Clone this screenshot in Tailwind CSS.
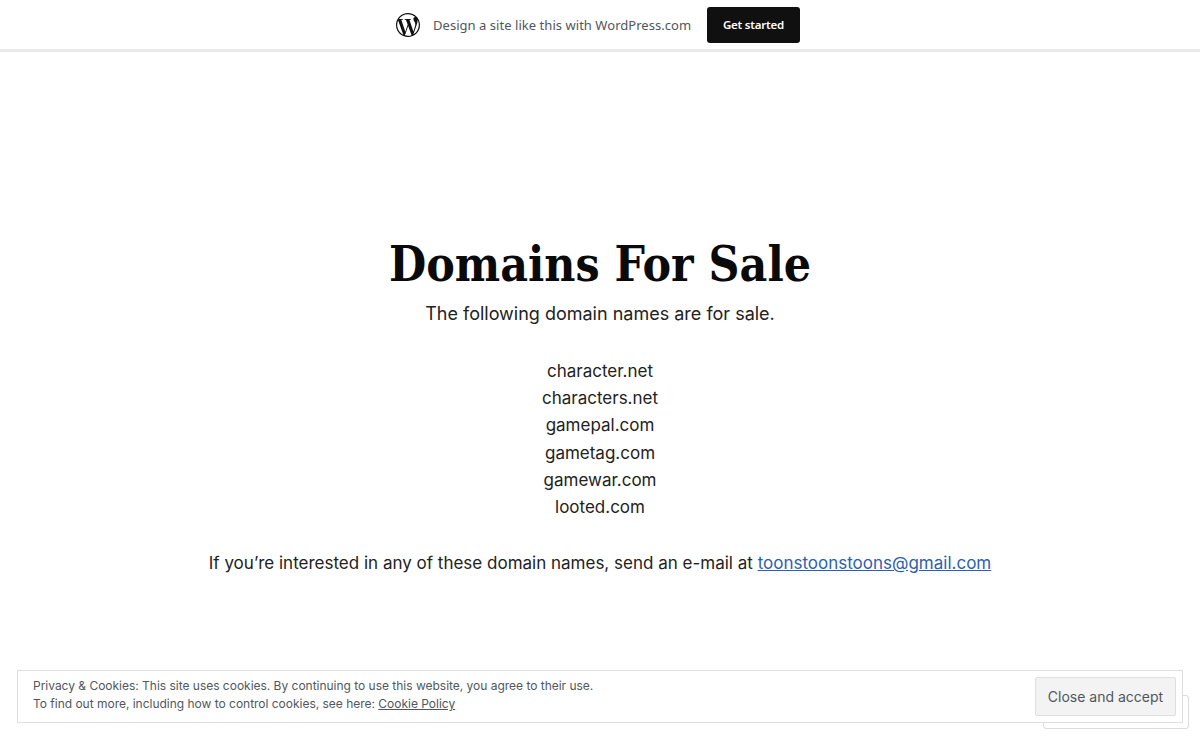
<!DOCTYPE html>
<html lang="en">
<head>
  <meta charset="UTF-8">
  <meta name="viewport" content="width=device-width, initial-scale=1">
  <title>Domains For Sale</title>
  <script src="https://cdn.jsdelivr.net/npm/@tailwindcss/browser@4"></script>
</head>
<body class="relative h-[740px] overflow-hidden bg-white font-['Inter',sans-serif] text-[#222]">
  <!-- WordPress bar -->
  <div class="flex h-[52px] items-start justify-center border-b-[3px] border-[#e9e9e9]">
    <div class="mr-1 flex h-[49px] items-center">
      <svg class="h-6 w-6 text-[#101010]" viewBox="2 2 20 20" fill="currentColor"><path d="M12 2C6.486 2 2 6.486 2 12c0 5.513 4.486 10 10 10s10-4.487 10-10c0-5.514-4.486-10-10-10zM3.009 12c0-1.298.28-2.533.78-3.646l4.291 11.756C5.08 18.652 3.009 15.568 3.009 12zm8.991 8.991c-.882 0-1.734-.129-2.54-.367l2.698-7.84 2.764 7.572c.018.044.04.085.064.124-.935.329-1.94.511-2.986.511zm1.239-13.207c.542-.028 1.03-.085 1.03-.085.485-.057.428-.77-.057-.742 0 0-1.458.114-2.4.114-.885 0-2.371-.114-2.371-.114-.485-.028-.542.714-.057.742 0 0 .459.057.944.085l1.402 3.841-1.969 5.906-3.276-9.747c.542-.028 1.03-.085 1.03-.085.485-.057.428-.77-.057-.742 0 0-1.458.114-2.4.114-.169 0-.368-.004-.58-.011C6.095 4.437 8.856 3.009 12 3.009c2.343 0 4.476.896 6.077 2.363-.039-.002-.077-.007-.117-.007-.884 0-1.512.77-1.512 1.597 0 .742.428 1.37.885 2.112.343.6.742 1.37.742 2.483 0 .77-.296 1.664-.685 2.91l-.898 2.999-3.253-9.682zm3.28 11.988l2.747-7.94c.513-1.283.684-2.309.684-3.221 0-.331-.022-.638-.061-.925.702 1.281 1.102 2.751 1.102 4.314 0 3.317-1.798 6.214-4.472 7.772z"/></svg>
      <span class="mt-0.5 ml-[13px] w-[258px] font-['Noto_Sans',sans-serif] text-[13px] tracking-[0.04px] whitespace-nowrap text-[#50575e]">Design a site like this with WordPress.com</span>
      <a href="#" class="ml-4 flex h-9 w-[93px] items-center justify-center rounded-[3px] bg-[#101010] font-['Noto_Sans',sans-serif] text-[11.5px] font-semibold tracking-[-0.2px] text-white">Get started</a>
    </div>
  </div>

  <!-- Page content -->
  <main class="flex flex-col items-center pt-[185px] text-center text-[17px] leading-[27.2px]">
    <h1 class="font-['DejaVu_Serif',serif] text-[47.7px] leading-[54px] font-bold font-stretch-condensed text-[#0a0a0a]">Domains For Sale</h1>
    <p class="mt-[9px] text-[18px]">The following domain names are for sale.</p>
    <p class="mt-[30.7px]">character.net<br>characters.net<br>gamepal.com<br>gametag.com<br>gamewar.com<br>looted.com</p>
    <p class="mt-[29.3px]">If you’re interested in any of these domain names, send an e-mail at <a href="#" class="text-[#2c5fb3] underline">toonstoonstoons@gmail.com</a></p>
  </main>

  <!-- Follow button behind the cookie notice -->
  <div class="absolute top-[695px] left-[1043px] h-[34px] w-[146px] rounded-[3px] border border-[#dcdcde] bg-white"></div>

  <!-- Cookie notice -->
  <div class="absolute top-[670px] left-[17px] flex h-[53px] w-[1166px] items-center justify-between border border-[#dedfe0] bg-white pr-[6px] pl-[15px]">
    <p class="pb-[3px] text-[12px] leading-[18px] tracking-[-0.015px] text-[#50575e]">Privacy &amp; Cookies: This site uses cookies. By continuing to use this website, you agree to their use.<br>To find out more, including how to control cookies, see here: <a href="#" class="underline">Cookie Policy</a></p>
    <button class="h-[39px] w-[141px] rounded-[2px] border border-[#dedfe0] bg-[#f3f3f3] text-[14px] text-[#50575e]">Close and accept</button>
  </div>
</body>
</html>
